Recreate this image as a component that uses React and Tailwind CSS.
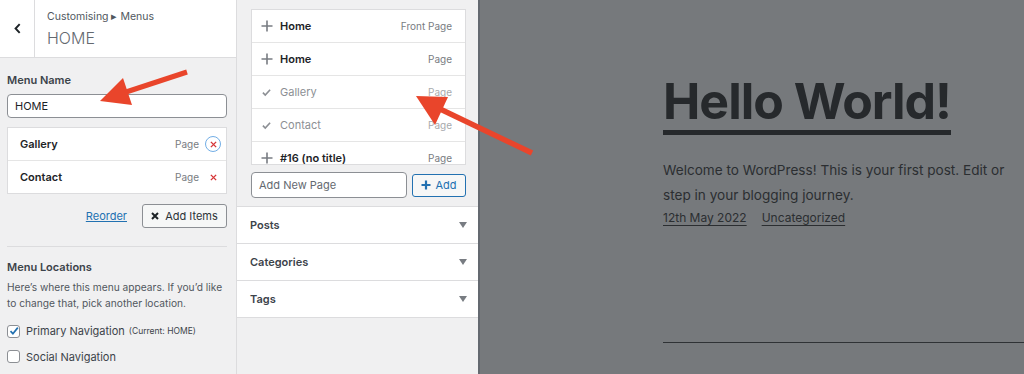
import React from "react";

const ui = { fontFamily: "Inter, 'Noto Sans', sans-serif" };
const pv = { fontFamily: "Inter, 'Noto Sans', sans-serif" };

function Plus({ className = "" }) {
  return (
    <svg viewBox="0 0 12 12" className={className} width="12" height="12">
      <path d="M6 0.5v11M0.5 6h11" stroke="currentColor" strokeWidth="1.6" fill="none" />
    </svg>
  );
}

function Check({ className = "" }) {
  return (
    <svg viewBox="0 0 10 10" className={className} width="9" height="9">
      <path d="M1 5.2l2.6 2.6L9 2" stroke="currentColor" strokeWidth="1.8" fill="none" />
    </svg>
  );
}

function Caret() {
  return (
    <svg viewBox="0 0 8 6" width="8" height="6" className="text-[#787c82]">
      <path d="M0 0h8L4 6z" fill="currentColor" />
    </svg>
  );
}

function AvailRow({ added, title, type, bold }) {
  return (
    <div className="flex h-[33px] shrink-0 items-center border-b border-[#e5e5e5] pl-[9px] pr-[13px]">
      <span className={`flex w-[18px] items-center ${added ? "pl-[1px]" : ""}`}>
        {added ? <Check className="text-[#8c8f94]" /> : <Plus className="text-[#787c82]" />}
      </span>
      <span className={`ml-[1px] text-[11px] ${bold ? "font-semibold text-[#1d2327]" : "text-[#8c8f94]"}`}>{title}</span>
      <span className={`ml-auto text-[10px] ${added ? "text-[#a7aaad]" : "text-[#787c82]"}`}>{type}</span>
    </div>
  );
}

function Section({ title }) {
  return (
    <div className="flex h-[37px] items-center justify-between border-b border-[#dcdcde] bg-white pl-[13px] pr-[11px]">
      <span className="text-[11px] font-semibold text-[#3c434a]">{title}</span>
      <Caret />
    </div>
  );
}

export default function App() {
  return (
    <div className="relative flex h-[374px] w-[1024px] overflow-hidden bg-[#f0f0f1]" style={ui}>
      {/* Left panel */}
      <aside className="flex w-[237px] shrink-0 flex-col border-r border-[#dcdcde] bg-[#f0f0f1]">
        <div className="flex h-[58px] shrink-0 border-b border-[#dcdcde] bg-white">
          <div className="flex w-[35px] items-center justify-center border-r border-[#dcdcde]">
            <svg viewBox="0 0 8 12" width="7" height="11">
              <path d="M6.5 1L1.8 6l4.7 5" stroke="#1d2327" strokeWidth="2.2" fill="none" />
            </svg>
          </div>
          <div className="flex flex-col pl-[12px] pt-[9px]">
            <span className="text-[10.5px] leading-[16px] text-[#50575e]">Customising ▸ Menus</span>
            <span className="mt-[4px] text-[16px] font-light leading-[18px] text-[#646970]">HOME</span>
          </div>
        </div>
        <div className="flex flex-col pl-[7px] pr-[9px]">
          <div className="mt-[15px] text-[11px] font-semibold leading-[14px] text-[#3c434a]">Menu Name</div>
          <div className="mt-[7px] flex h-[24px] items-center rounded-[4px] border border-[#8c8f94] bg-white pl-[7px] text-[11px] text-[#1d2327]">HOME</div>
          <div className="mt-[9px] border border-[#dcdcde] bg-white">
            <div className="flex h-[33px] items-center border-b border-[#e5e5e5] pl-[12px] pr-[5px]">
              <span className="text-[11px] font-semibold text-[#1d2327]">Gallery</span>
              <span className="ml-auto text-[10px] text-[#787c82]">Page</span>
              <span className="ml-[6px] flex h-[16px] w-[16px] items-center justify-center rounded-full border border-[#72aee6]">
                <svg viewBox="0 0 8 8" width="7" height="7"><path d="M1 1l6 6M7 1L1 7" stroke="#d63638" strokeWidth="1.6" /></svg>
              </span>
            </div>
            <div className="flex h-[32px] items-center pl-[12px] pr-[5px]">
              <span className="text-[11px] font-semibold text-[#1d2327]">Contact</span>
              <span className="ml-auto text-[10px] text-[#787c82]">Page</span>
              <span className="ml-[6px] flex h-[16px] w-[16px] items-center justify-center">
                <svg viewBox="0 0 8 8" width="7" height="7"><path d="M1 1l6 6M7 1L1 7" stroke="#d63638" strokeWidth="1.6" /></svg>
              </span>
            </div>
          </div>
          <div className="mt-[10px] flex items-center justify-end">
            <span className="text-[11px] text-[#2271b1] underline">Reorder</span>
            <button className="ml-[15px] flex h-[24px] w-[85px] items-center justify-center gap-[6px] rounded-[3px] border border-[#8c8f94] bg-[#f6f7f7] text-[11px] text-[#2c3338]">
              <svg viewBox="0 0 8 8" width="8" height="8"><path d="M1 1l6 6M7 1L1 7" stroke="#1d2327" strokeWidth="2" /></svg>
              Add Items
            </button>
          </div>
          <div className="mt-[18px] border-t border-[#dcdcde]" />
          <div className="mt-[13px] text-[11px] font-semibold leading-[14px] text-[#3c434a]">Menu Locations</div>
          <p className="mt-[5px] text-[10.2px] leading-[16px] text-[#50575e]">
            Here’s where this menu appears. If you’d like
            <br />
            to change that, pick another location.
          </p>
          <label className="mt-[12px] flex items-center">
            <span className="flex h-[13px] w-[13px] items-center justify-center rounded-[3px] border border-[#8c8f94] bg-white">
              <svg viewBox="0 0 10 10" width="10" height="10"><path d="M1.5 5.2l2.4 2.5L8.8 1.6" stroke="#2271b1" strokeWidth="1.7" fill="none" /></svg>
            </span>
            <span className="ml-[6px] text-[11px] text-[#3c434a]">Primary Navigation</span>
            <span className="ml-[4px] text-[8.5px] text-[#3c434a]">(Current: HOME)</span>
          </label>
          <label className="mt-[9px] flex items-center">
            <span className="h-[13px] w-[13px] rounded-[3px] border border-[#8c8f94] bg-white" />
            <span className="ml-[6px] text-[11px] text-[#3c434a]">Social Navigation</span>
          </label>
        </div>
      </aside>

      {/* Middle panel */}
      <section className="flex w-[243px] shrink-0 flex-col border-r-2 border-[#646970] bg-[#f0f0f1]">
        <div className="pl-[14px] pr-[12px] pt-[9px]">
          <div className="flex h-[156px] flex-col overflow-hidden border border-[#dcdcde] bg-white">
            <AvailRow title="Home" type="Front Page" bold />
            <AvailRow title="Home" type="Page" bold />
            <AvailRow title="Gallery" type="Page" added />
            <AvailRow title="Contact" type="Page" added />
            <AvailRow title="#16 (no title)" type="Page" bold />
          </div>
          <div className="mt-[7px] flex items-center">
            <div className="flex h-[26px] w-[156px] items-center rounded-[4px] border border-[#8c8f94] bg-white pl-[7px] text-[11px] text-[#646970]">Add New Page</div>
            <button className="ml-auto flex h-[23px] w-[54px] items-center justify-center gap-[4px] rounded-[3px] border border-[#2271b1] bg-[#f6f7f7] text-[11px] text-[#2271b1]">
              <svg viewBox="0 0 10 10" width="10" height="10"><path d="M5 0.5v9M0.5 5h9" stroke="#2271b1" strokeWidth="2.2" /></svg>
              Add
            </button>
          </div>
        </div>
        <div className="mt-[8px] border-t border-[#dcdcde]">
          <Section title="Posts" />
          <Section title="Categories" />
          <Section title="Tags" />
        </div>
      </section>

      {/* Preview */}
      <main className="flex flex-1 flex-col bg-[#76797c] pl-[183px]" style={pv}>
        <h1 className="mt-[72px] text-[50px] font-bold leading-[58px] tracking-[-0.02em] text-[#26292c]">
          <span className="inline-block border-b-[5px] border-[#26292c] pb-[1px] leading-[56px]">Hello World!</span>
        </h1>
        <p className="mt-[23px] whitespace-nowrap text-[13.6px] leading-[25px] text-[#2b2e31]">
          Welcome to WordPress! This is your first post. Edit or
          <br />
          step in your blogging journey.
        </p>
        <div className="mt-[1px] flex gap-[15px] text-[12px] leading-[18px] text-[#2b2e31]">
          <span className="underline underline-offset-[3px]">12th May 2022</span>
          <span className="underline underline-offset-[3px]">Uncategorized</span>
        </div>
        <div className="mt-[115px] border-t border-[#2f3235]" />
      </main>

      {/* Annotation arrows */}
      <svg className="pointer-events-none absolute left-0 top-0" width="1024" height="374" viewBox="0 0 1024 374">
        <line x1="187" y1="72" x2="120" y2="94" stroke="#e9452b" strokeWidth="5" />
        <polygon points="100,101 123,78 132,105" fill="#e9452b" />
        <line x1="532" y1="153" x2="438" y2="108" stroke="#e9452b" strokeWidth="5.5" />
        <polygon points="416,96 448,97 435,125" fill="#e9452b" />
      </svg>
    </div>
  );
}
